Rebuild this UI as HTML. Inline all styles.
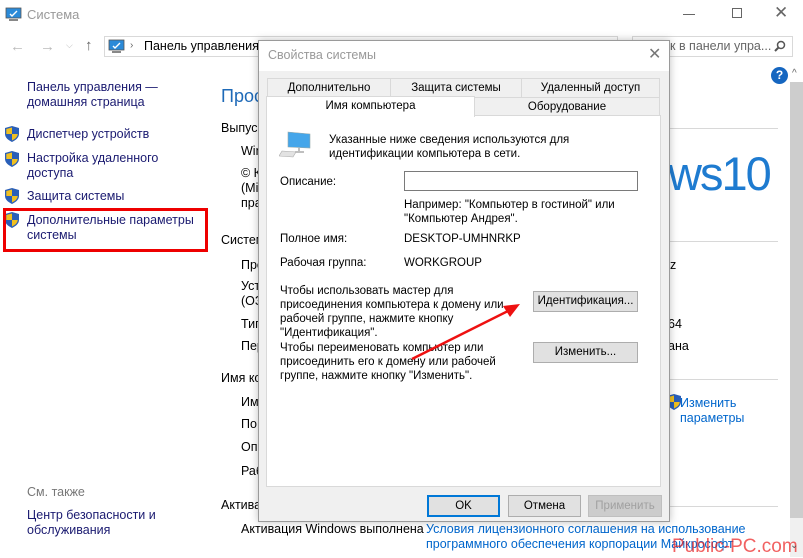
<!DOCTYPE html>
<html><head><meta charset="utf-8"><style>
*{margin:0;padding:0;box-sizing:border-box}
body{width:803px;height:557px;overflow:hidden;background:#fff;font-family:"Liberation Sans","DejaVu Sans",sans-serif;font-size:12.5px;color:#000;position:relative}
.a{position:absolute;white-space:nowrap}
.nav{color:#1a1a70;font-size:12.5px;line-height:15px}
.lnk{color:#0066cc}
.d{font-size:11.5px;line-height:14px}
.btn{position:absolute;background:#e1e1e1;border:1px solid #adadad;text-align:center;font-size:11.5px;line-height:19px}
.hr{position:absolute;height:1px;background:#d8d8d8}
</style></head><body>
<svg class="a" style="left:5px;top:7px" width="17" height="15" viewBox="0 0 17 15"><rect x="1" y="1" width="15" height="10" fill="#2b8ad8" stroke="#555" stroke-width=".8"/><path d="M5 7l2 2 5-5" stroke="#fff" stroke-width="1.4" fill="none"/><rect x="4" y="12" width="9" height="2" fill="#888"/></svg>
<div class="a" style="left:27px;top:7px;color:#999;font-size:13px">Система</div>
<div class="a" style="left:683px;top:14px;width:12px;height:1px;background:#666"></div>
<div class="a" style="left:732px;top:8px;width:10px;height:10px;border:1px solid #666"></div>
<div class="a" style="left:774px;top:3px;font-size:17px;color:#666">✕</div>
<div class="a" style="left:10px;top:38px;color:#bbb;font-size:15px">←</div>
<div class="a" style="left:40px;top:38px;color:#bbb;font-size:15px">→</div>
<div class="a" style="left:66px;top:40px;color:#bbb;font-size:9px">⌵</div>
<div class="a" style="left:85px;top:37px;color:#666;font-size:15px">↑</div>
<div class="a" style="left:104px;top:36px;width:514px;height:21px;border:1px solid #d9d9d9"></div>
<svg class="a" style="left:108px;top:39px" width="17" height="15" viewBox="0 0 17 15"><rect x="1" y="1" width="15" height="10" fill="#2b8ad8" stroke="#555" stroke-width=".8"/><path d="M5 7l2 2 5-5" stroke="#fff" stroke-width="1.4" fill="none"/><rect x="4" y="12" width="9" height="2" fill="#888"/></svg>
<div class="a" style="left:130px;top:40px;color:#666;font-size:10px">›</div>
<div class="a" style="left:144px;top:39px;font-size:12.5px">Панель управления</div>
<div class="a" style="left:632px;top:36px;width:161px;height:21px;border:1px solid #d9d9d9"></div>
<div class="a" style="left:670px;top:39px;color:#666;font-size:12.5px">к в панели упра...</div>
<svg class="a" style="left:774px;top:40px" width="12" height="12"><circle cx="7" cy="5" r="3.5" stroke="#555" stroke-width="1.5" fill="none"/><path d="M4.5 7.5L1 11" stroke="#555" stroke-width="2"/></svg>
<div class="a" style="left:771px;top:67px;width:17px;height:17px;border-radius:50%;background:#1566c0;color:#fff;font-weight:bold;font-size:12px;text-align:center;line-height:17px">?</div>
<div class="a" style="left:792px;top:68px;color:#666;font-size:10px">^</div>
<div class="a" style="left:790px;top:82px;width:13px;height:436px;background:#cdcdcd"></div>
<div class="a" style="left:790px;top:518px;width:13px;height:39px;background:#f0f0f0"></div>
<div class="a nav" style="left:27px;top:80px">Панель управления —<br>домашняя страница</div>
<svg width="0" height="0" style="position:absolute"><defs><g id="sh"><path d="M7 0L14 2V8C14 12 10 14.5 7 16C4 14.5 0 12 0 8V2Z" fill="#2a5fb8"/><path d="M7 1.5V8H1.3V3Z" fill="#f0c020"/><path d="M7 8H12.7C12.5 11 10 13 7 14.5Z" fill="#f0c020"/></g></defs></svg>
<svg class="a" style="left:5px;top:126px" width="14" height="16"><use href="#sh"/></svg>
<svg class="a" style="left:5px;top:151px" width="14" height="16"><use href="#sh"/></svg>
<svg class="a" style="left:5px;top:188px" width="14" height="16"><use href="#sh"/></svg>
<svg class="a" style="left:5px;top:212px" width="14" height="16"><use href="#sh"/></svg>
<div class="a nav" style="left:27px;top:127px">Диспетчер устройств</div>
<div class="a nav" style="left:27px;top:151px">Настройка удаленного<br>доступа</div>
<div class="a nav" style="left:27px;top:189px">Защита системы</div>
<div class="a nav" style="left:27px;top:213px">Дополнительные параметры<br>системы</div>
<div class="a" style="left:3px;top:208px;width:205px;height:44px;border:3px solid #ee0000"></div>
<div class="a" style="left:27px;top:485px;color:#777;font-size:12.5px">См. также</div>
<div class="a nav" style="left:27px;top:508px">Центр безопасности и<br>обслуживания</div>
<div class="a" style="left:221px;top:86px;color:#1e6ab8;font-size:18px">Просмотр</div>
<div class="a" style="left:221px;top:121px">Выпуск</div>
<div class="a" style="left:241px;top:144px">Windows</div>
<div class="a" style="left:241px;top:166px;line-height:15px">© К<br>(Mi<br>пра</div>
<div class="a" style="left:221px;top:233px">Система</div>
<div class="a" style="left:241px;top:258px">Про</div>
<div class="a" style="left:241px;top:279px;line-height:15px">Уст<br>(ОЗ</div>
<div class="a" style="left:241px;top:317px">Тип</div>
<div class="a" style="left:241px;top:339px">Пер</div>
<div class="a" style="left:221px;top:371px">Имя ко</div>
<div class="a" style="left:241px;top:395px">Им</div>
<div class="a" style="left:241px;top:417px">По</div>
<div class="a" style="left:241px;top:440px">Оп</div>
<div class="a" style="left:241px;top:464px">Раб</div>
<div class="a" style="left:221px;top:498px">Актива</div>
<div class="a" style="left:241px;top:522px">Активация Windows выполнена</div>
<div class="a lnk" style="left:426px;top:522px;line-height:15px">Условия лицензионного соглашения на использование<br>программного обеспечения корпорации Майкрософт</div>
<div class="hr" style="left:665px;top:128px;width:113px"></div>
<div class="hr" style="left:665px;top:241px;width:113px"></div>
<div class="hr" style="left:665px;top:379px;width:113px"></div>
<div class="hr" style="left:665px;top:506px;width:113px"></div>
<div class="a" style="left:668px;top:146px;color:#1e7bd0;font-size:47px;letter-spacing:-2px;font-weight:300">ws10</div>
<div class="a" style="left:670px;top:258px">z</div>
<div class="a" style="left:668px;top:317px">64</div>
<div class="a" style="left:668px;top:339px">ана</div>
<svg class="a" style="left:667px;top:394px" width="14" height="16"><use href="#sh"/></svg>
<div class="a lnk" style="left:680px;top:396px;line-height:15px">Изменить<br>параметры</div>
<div class="a" style="left:258px;top:40px;width:412px;height:482px;background:#f0f0f0;border:1px solid #9a9a9a;box-shadow:0 0 8px rgba(0,0,0,.25)">
 <div class="a" style="left:0;top:0;width:410px;height:30px;background:#fff"></div>
 <div class="a" style="left:9px;top:7px;color:#999;font-size:12.5px">Свойства системы</div>
 <div class="a" style="left:389px;top:3px;color:#777;font-size:16px">✕</div>
 <div class="a d" style="left:8px;top:37px;width:124px;height:20px;border:1px solid #d9d9d9;background:#f0f0f0;text-align:center;line-height:19px">Дополнительно</div>
 <div class="a d" style="left:131px;top:37px;width:132px;height:20px;border:1px solid #d9d9d9;background:#f0f0f0;text-align:center;line-height:19px">Защита системы</div>
 <div class="a d" style="left:262px;top:37px;width:139px;height:20px;border:1px solid #d9d9d9;background:#f0f0f0;text-align:center;line-height:19px">Удаленный доступ</div>
 <div class="a d" style="left:215px;top:56px;width:186px;height:19px;border:1px solid #d9d9d9;background:#f0f0f0;text-align:center;line-height:18px">Оборудование</div>
 <div class="a" style="left:7px;top:74px;width:395px;height:372px;background:#fff;border:1px solid #d9d9d9"></div>
 <div class="a d" style="left:7px;top:55px;width:209px;height:21px;background:#fff;border:1px solid #d9d9d9;border-bottom:none;text-align:center;line-height:18px">Имя компьютера</div>
 <svg class="a" style="left:20px;top:90px" width="34" height="28" viewBox="0 0 34 28"><path d="M9 1L31 3V17L9 16Z" fill="#45a6ea" stroke="#9aa" stroke-width=".6"/><path d="M20 17V20M16 21H25" stroke="#aaa" stroke-width="1.5"/><path d="M3 20L17 21L14 26L0 25Z" fill="#e2e2e2" stroke="#aaa" stroke-width=".6"/></svg>
 <div class="a d" style="left:70px;top:92px">Указанные ниже сведения используются для<br>идентификации компьютера в сети.</div>
 <div class="a d" style="left:21px;top:134px">Описание:</div>
 <div class="a" style="left:145px;top:130px;width:234px;height:20px;border:1px solid #7a7a7a;background:#fff"></div>
 <div class="a d" style="left:145px;top:157px">Например: "Компьютер в гостиной" или<br>"Компьютер Андрея".</div>
 <div class="a d" style="left:21px;top:191px">Полное имя:</div>
 <div class="a d" style="left:145px;top:191px">DESKTOP-UMHNRKP</div>
 <div class="a d" style="left:21px;top:215px">Рабочая группа:</div>
 <div class="a d" style="left:145px;top:215px">WORKGROUP</div>
 <div class="a d" style="left:21px;top:243px">Чтобы использовать мастер для<br>присоединения компьютера к домену или<br>рабочей группе, нажмите кнопку<br>"Идентификация".</div>
 <div class="btn" style="left:274px;top:250px;width:105px;height:21px">Идентификация...</div>
 <div class="a d" style="left:21px;top:300px">Чтобы переименовать компьютер или<br>присоединить его к домену или рабочей<br>группе, нажмите кнопку "Изменить".</div>
 <div class="btn" style="left:274px;top:301px;width:105px;height:21px">Изменить...</div>
 <div class="btn" style="left:168px;top:454px;width:73px;height:22px;border:2px solid #0078d7;line-height:18px">OK</div>
 <div class="btn" style="left:249px;top:454px;width:73px;height:22px;line-height:20px">Отмена</div>
 <div class="btn" style="left:329px;top:454px;width:74px;height:22px;line-height:20px;color:#a0a0a0;background:#ccc;border-color:#bfbfbf">Применить</div>
</div>
<svg class="a" style="left:0;top:0" width="803" height="557"><path d="M412 359L510 310" stroke="#ee1111" stroke-width="2.5"/><path d="M520 304L503 306L510 317Z" fill="#ee1111"/></svg>
<div class="a" style="left:672px;top:536px;color:rgba(235,30,30,.7);font-size:19px">Public-PC.com</div>
<div class="a" style="left:790px;top:540px;color:#555;font-size:10px">⌄</div>
</body></html>
